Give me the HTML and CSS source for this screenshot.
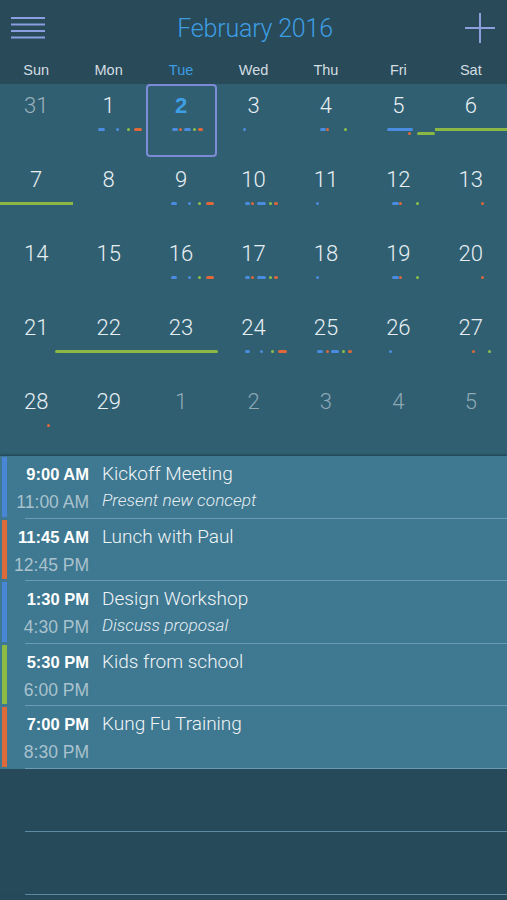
FILE: index.html
```html
<!DOCTYPE html>
<html>
<head>
<meta charset="utf-8">
<link rel="stylesheet" href="styles.css">
</head>
<body>
<div class="app">
  <header class="top">
    <div class="bar">
      <svg class="menu" width="34" height="24" viewBox="0 0 34 24"><g stroke="#8a9ee0" stroke-width="2"><line x1="0" y1="2" x2="34" y2="2"/><line x1="0" y1="8.5" x2="34" y2="8.5"/><line x1="0" y1="15" x2="34" y2="15"/><line x1="0" y1="21.5" x2="34" y2="21.5"/></g></svg>
      <h1 class="title">February 2016</h1>
      <svg class="plus" width="30" height="30" viewBox="0 0 30 30"><g stroke="#8b9fdc" stroke-width="2"><line x1="15" y1="0" x2="15" y2="30"/><line x1="0" y1="15" x2="30" y2="15"/></g></svg>
    </div>
    <div class="weekdays">
      <span>Sun</span><span>Mon</span><span class="today">Tue</span><span>Wed</span><span>Thu</span><span>Fri</span><span>Sat</span>
    </div>
  </header>

  <section class="month">
    <!-- week 1 -->
    <div class="cell other"><span class="num">31</span><div class="track"></div></div>
    <div class="cell"><span class="num">1</span><div class="track">
      <i class="b" style="left:26px;width:7px"></i><i class="b" style="left:44px;width:3px"></i><i class="g" style="left:55px;width:3px"></i><i class="o" style="left:62px;width:8px"></i></div></div>
    <div class="cell selected"><span class="num">2</span><div class="track">
      <i class="b" style="left:27px;width:6px"></i><i class="o" style="left:34px;width:3px"></i><i class="b" style="left:39px;width:7px"></i><i class="g" style="left:48px;width:3px"></i><i class="o" style="left:53px;width:5px"></i></div></div>
    <div class="cell"><span class="num">3</span><div class="track">
      <i class="b" style="left:26px;width:3px"></i></div></div>
    <div class="cell"><span class="num">4</span><div class="track">
      <i class="b" style="left:30px;width:6px"></i><i class="o" style="left:36px;width:3px"></i><i class="g" style="left:54px;width:3px"></i></div></div>
    <div class="cell"><span class="num">5</span><div class="track">
      <i class="b" style="left:25px;width:26px"></i><i class="o low" style="left:46px;width:3px"></i><i class="gb low" style="left:55px;width:18px"></i></div></div>
    <div class="cell"><span class="num">6</span><div class="track">
      <i class="gb flat" style="left:0;width:73px"></i></div></div>
    <!-- week 2 -->
    <div class="cell"><span class="num">7</span><div class="track">
      <i class="gb flat" style="left:0;width:73px"></i></div></div>
    <div class="cell"><span class="num">8</span><div class="track"></div></div>
    <div class="cell"><span class="num">9</span><div class="track">
      <i class="b" style="left:26px;width:6px"></i><i class="b" style="left:43px;width:3px"></i><i class="g" style="left:53px;width:3px"></i><i class="o" style="left:61px;width:8px"></i></div></div>
    <div class="cell"><span class="num">10</span><div class="track">
      <i class="b" style="left:28px;width:5px"></i><i class="o" style="left:34px;width:3px"></i><i class="b" style="left:40px;width:9px"></i><i class="g" style="left:52px;width:3px"></i><i class="o" style="left:57px;width:4px"></i></div></div>
    <div class="cell"><span class="num">11</span><div class="track">
      <i class="b" style="left:26px;width:3px"></i></div></div>
    <div class="cell"><span class="num">12</span><div class="track">
      <i class="b" style="left:30px;width:7px"></i><i class="o" style="left:37px;width:3px"></i><i class="g" style="left:54px;width:3px"></i></div></div>
    <div class="cell"><span class="num">13</span><div class="track">
      <i class="o" style="left:46px;width:3px"></i></div></div>
    <!-- week 3 -->
    <div class="cell"><span class="num">14</span><div class="track"></div></div>
    <div class="cell"><span class="num">15</span><div class="track"></div></div>
    <div class="cell"><span class="num">16</span><div class="track">
      <i class="b" style="left:26px;width:6px"></i><i class="b" style="left:43px;width:3px"></i><i class="g" style="left:53px;width:3px"></i><i class="o" style="left:61px;width:8px"></i></div></div>
    <div class="cell"><span class="num">17</span><div class="track">
      <i class="b" style="left:28px;width:5px"></i><i class="o" style="left:34px;width:3px"></i><i class="b" style="left:40px;width:9px"></i><i class="g" style="left:52px;width:3px"></i><i class="o" style="left:57px;width:4px"></i></div></div>
    <div class="cell"><span class="num">18</span><div class="track">
      <i class="b" style="left:26px;width:3px"></i></div></div>
    <div class="cell"><span class="num">19</span><div class="track">
      <i class="b" style="left:30px;width:7px"></i><i class="o" style="left:37px;width:3px"></i><i class="g" style="left:54px;width:3px"></i></div></div>
    <div class="cell"><span class="num">20</span><div class="track">
      <i class="o" style="left:46px;width:3px"></i></div></div>
    <!-- week 4 -->
    <div class="cell"><span class="num">21</span><div class="track">
      <i class="gb" style="left:55px;width:18px;border-radius:2px 0 0 2px"></i></div></div>
    <div class="cell"><span class="num">22</span><div class="track">
      <i class="gb flat" style="left:0;width:73px"></i></div></div>
    <div class="cell"><span class="num">23</span><div class="track">
      <i class="gb" style="left:0;width:73px;border-radius:0 2px 2px 0"></i></div></div>
    <div class="cell"><span class="num">24</span><div class="track">
      <i class="b" style="left:28px;width:5px"></i><i class="b" style="left:43px;width:3px"></i><i class="g" style="left:54px;width:3px"></i><i class="o" style="left:61px;width:9px"></i></div></div>
    <div class="cell"><span class="num">25</span><div class="track">
      <i class="b" style="left:27px;width:6px"></i><i class="o" style="left:36px;width:3px"></i><i class="b" style="left:41px;width:8px"></i><i class="g" style="left:52px;width:3px"></i><i class="o" style="left:58px;width:4px"></i></div></div>
    <div class="cell"><span class="num">26</span><div class="track">
      <i class="b" style="left:27px;width:3px"></i></div></div>
    <div class="cell"><span class="num">27</span><div class="track">
      <i class="o" style="left:37px;width:3px"></i><i class="g" style="left:53px;width:3px"></i></div></div>
    <!-- week 5 -->
    <div class="cell"><span class="num">28</span><div class="track">
      <i class="o" style="left:47px;width:3px"></i></div></div>
    <div class="cell"><span class="num">29</span><div class="track"></div></div>
    <div class="cell next"><span class="num">1</span><div class="track"></div></div>
    <div class="cell next"><span class="num">2</span><div class="track"></div></div>
    <div class="cell next"><span class="num">3</span><div class="track"></div></div>
    <div class="cell next"><span class="num">4</span><div class="track"></div></div>
    <div class="cell next"><span class="num">5</span><div class="track"></div></div>
  </section>

  <section class="events">
    <div class="event blue">
      <div class="times"><span class="start">9:00 AM</span><span class="end">11:00 AM</span></div>
      <div class="info"><span class="name">Kickoff Meeting</span><span class="note">Present new concept</span></div>
    </div>
    <div class="event orange">
      <div class="times"><span class="start">11:45 AM</span><span class="end">12:45 PM</span></div>
      <div class="info"><span class="name">Lunch with Paul</span></div>
    </div>
    <div class="event blue">
      <div class="times"><span class="start">1:30 PM</span><span class="end">4:30 PM</span></div>
      <div class="info"><span class="name">Design Workshop</span><span class="note">Discuss proposal</span></div>
    </div>
    <div class="event green">
      <div class="times"><span class="start">5:30 PM</span><span class="end">6:00 PM</span></div>
      <div class="info"><span class="name">Kids from school</span></div>
    </div>
    <div class="event orange">
      <div class="times"><span class="start">7:00 PM</span><span class="end">8:30 PM</span></div>
      <div class="info"><span class="name">Kung Fu Training</span></div>
    </div>
    <div class="empty"></div>
    <div class="empty"></div>
  </section>
</div>
</body>
</html>
```
FILE: styles.css
```css
* { box-sizing: border-box; }
html, body { margin: 0; padding: 0; }
body {
  background: #274a5a;
  font-family: "Liberation Sans", Arial, sans-serif;
  width: 507px;
  height: 900px;
  overflow: hidden;
}
.app { display: flex; flex-direction: column; }

.top { background: #284a59; height: 84px; }
.bar {
  height: 56px;
  display: flex;
  align-items: center;
  justify-content: space-between;
  padding: 0 11px 0 11px;
}
.plus { margin-right: 1px; }
.title {
  margin: 0;
  font-family: Roboto, "Liberation Sans", sans-serif;
  font-weight: 300;
  font-size: 25px;
  color: #3e9de2;
  letter-spacing: -0.2px;
}
.weekdays {
  display: grid;
  grid-template-columns: repeat(7, 1fr);
  height: 28px;
  align-items: center;
  text-align: center;
  font-size: 14.5px;
  color: #d3dde2;
}
.weekdays .today { color: #3e9de2; }

.month {
  background: #305f72;
  display: grid;
  grid-template-columns: repeat(7, 1fr);
  grid-auto-rows: 74px;
  padding-bottom: 2px;
}
.cell {
  position: relative;
  display: flex;
  flex-direction: column;
  align-items: center;
  padding-top: 9px;
}
.num {
  font-family: Roboto, "Liberation Sans", sans-serif;
  font-weight: 300;
  font-size: 22px;
  line-height: 26px;
  color: #e8eff2;
}
.other .num { color: #9db1bb; }
.next .num { color: #8ea8b4; }
.selected::before {
  content: "";
  position: absolute;
  left: 1px; right: 0; top: 0; bottom: 1px;
  border: 2px solid #7b8bd6;
  border-radius: 4px;
}
.selected .num { font-weight: 700; color: #3f9fe6; font-family: "Liberation Sans", Arial, sans-serif; }

.track {
  position: relative;
  align-self: stretch;
  height: 3px;
  margin-top: 9px;
}
.track i {
  position: absolute;
  top: 0;
  height: 3px;
  border-radius: 2px;
}
.track i.low { top: 4px; }
.track .b { background: #4a8ce0; }
.track .o { background: #e0673a; }
.track .g { background: #8cc04a; }
.track .gb { background: #8bb845; }
.track .flat { border-radius: 0; }

.events {
  display: flex;
  flex-direction: column;
  box-shadow: 0 -1px 2px rgba(20, 45, 55, 0.6);
}
.event {
  height: 62.6px;
  display: flex;
  background:
    linear-gradient(#6a9db2, #6a9db2) no-repeat 25px 100% / calc(100% - 25px) 1px,
    #3e7891;
  padding-left: 2px;
}
.event::before {
  content: "";
  width: 5px;
  margin: 1px 0 2px 0;
  flex: none;
}
.event.blue::before { background: #4a86d6; }
.event.orange::before { background: #dd6a3b; }
.event.green::before { background: #8cba45; }
.times {
  width: 82px;
  display: flex;
  flex-direction: column;
  align-items: flex-end;
  padding-top: 8px;
}
.start {
  font-weight: 700;
  font-size: 16.5px;
  line-height: 20px;
  color: #ffffff;
}
.end {
  font-size: 17.5px;
  line-height: 20px;
  margin-top: 8px;
  color: #a9c2cd;
}
.info {
  display: flex;
  flex-direction: column;
  padding-left: 13px;
  padding-top: 6px;
}
.name {
  font-family: Roboto, "Liberation Sans", sans-serif;
  font-weight: 300;
  font-size: 19px;
  line-height: 24px;
  color: #f1f5f7;
}
.note {
  font-family: Roboto, "Liberation Sans", sans-serif;
  font-weight: 300;
  font-style: italic;
  font-size: 17.3px;
  line-height: 20px;
  margin-top: 4px;
  color: #e6eef2;
}
.empty {
  height: 62.8px;
  background: linear-gradient(#5a8ba0, #5a8ba0) no-repeat 25px 100% / calc(100% - 25px) 1px;
}
```
